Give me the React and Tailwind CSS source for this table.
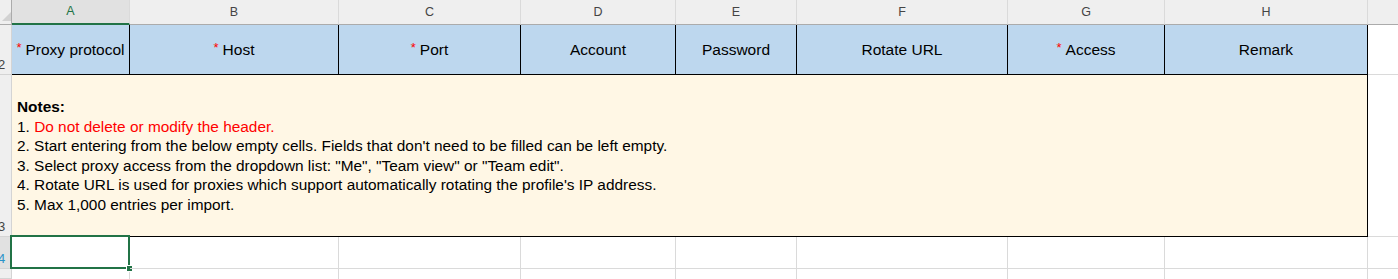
import React from 'react';

const columns = [
  { key: 'A', width: 118 },
  { key: 'B', width: 209 },
  { key: 'C', width: 182 },
  { key: 'D', width: 155 },
  { key: 'E', width: 121 },
  { key: 'F', width: 211 },
  { key: 'G', width: 157 },
  { key: 'H', width: 203 },
];

const headers = [
  { label: 'Proxy protocol', required: true },
  { label: 'Host', required: true },
  { label: 'Port', required: true },
  { label: 'Account' },
  { label: 'Password' },
  { label: 'Rotate URL' },
  { label: 'Access', required: true },
  { label: 'Remark' },
];

const notes = [
  "2. Start entering from the below empty cells. Fields that don't need to be filled can be left empty.",
  '3. Select proxy access from the dropdown list: "Me", "Team view" or "Team edit".',
  "4. Rotate URL is used for proxies which support automatically rotating the profile's IP address.",
  '5. Max 1,000 entries per import.',
];

const RowNumber = ({ n, active }) => (
  <div
    className={`flex items-end overflow-hidden border-r border-b border-[#d4d4d4] pb-[3px] ${
      active ? 'bg-[#e1e1e1] text-[#2a93c9]' : 'bg-[#efefef] text-[#444]'
    }`}
  >
    {n && <span className="-ml-[2px] text-[13px] leading-none">{n}</span>}
  </div>
);

export default function App() {
  return (
    <div className="h-[279px] w-[1398px] overflow-hidden bg-white font-['Liberation_Sans',Arial,sans-serif]">
      <div className="grid grid-cols-[12px_118px_209px_182px_155px_121px_211px_157px_203px_1fr] grid-rows-[25px_50px_162px_32px_1fr] h-full">
        {/* corner */}
        <div className="relative border-r border-b border-[#ababab] bg-[#efefef]">
          <svg className="absolute bottom-[3px] right-0" width="9" height="9" viewBox="0 0 9 9">
            <path d="M9 0 L9 9 L0 9 Z" fill="#d2d2d2" />
          </svg>
        </div>

        {/* column letters */}
        {columns.map((c, i) => (
          <div
            key={c.key}
            className={`flex items-center justify-center border-r border-[#dadada] text-[12.5px] ${
              i === 0
                ? 'border-b-2 border-b-[#217346] bg-[#e1e1e1] text-[#217346]'
                : 'border-b border-b-[#ababab] bg-[#efefef] text-[#444]'
            }`}
          >
            {c.key}
          </div>
        ))}
        <div className="border-b border-[#ababab] bg-[#efefef]" />

        {/* header row */}
        <RowNumber n="2" />
        {headers.map((h) => (
          <div
            key={h.label}
            className="flex items-center justify-center whitespace-nowrap border-r border-b border-black bg-[#bdd7ee] text-[15.5px] text-black"
          >
            {h.required && <span className="relative -top-[2px] mr-[4px] text-[13px] text-[#ff0000]">*</span>}
            {h.label}
          </div>
        ))}
        <div className="border-b border-[#dadada]" />

        {/* notes row */}
        <RowNumber n="3" />
        <div className="col-span-8 flex flex-col justify-center border-r border-b border-black bg-[#fff7e5] pl-[5px] text-[15.4px] leading-[19.5px] text-black">
          <div className="font-bold">Notes:</div>
          <div>
            1. <span className="text-[#ff0000]">Do not delete or modify the header.</span>
          </div>
          {notes.map((line) => (
            <div key={line} className="whitespace-nowrap">
              {line}
            </div>
          ))}
        </div>
        <div className="border-b border-[#dadada]" />

        {/* empty row with the active cell */}
        <RowNumber n="4" active />
        {columns.map((c, i) => (
          <div key={c.key} className="relative border-r border-b border-[#dadada]">
            {i === 0 && (
              <>
                <div className="absolute -left-[2px] -top-[2px] -right-[1px] -bottom-[1px] border-2 border-[#217346]" />
                <div className="absolute -right-[3px] -bottom-[3px] h-[5px] w-[5px] bg-[#217346] outline outline-1 outline-white" />
              </>
            )}
          </div>
        ))}
        <div className="border-b border-[#dadada]" />

        {/* next row, number scrolled out of view */}
        <RowNumber />
        {columns.map((c) => (
          <div key={c.key} className="border-r border-[#dadada]" />
        ))}
        <div />
      </div>
    </div>
  );
}
